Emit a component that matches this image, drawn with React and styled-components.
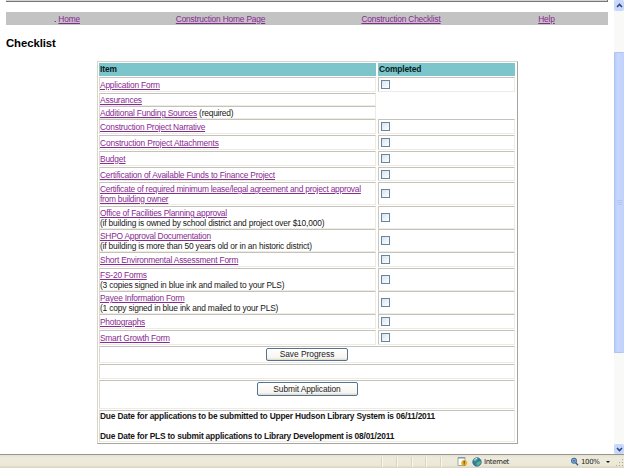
import React from 'react';
import styled, { createGlobalStyle } from 'styled-components';

const Global = createGlobalStyle`
  * { box-sizing: border-box; }
  body { margin: 0; background: #fff; overflow: hidden; }
`;

const Window = styled.div`
  width: 624px;
  height: 468px;
  display: grid;
  grid-template: 454px 14px / 614px 10px;
  background: #fff;
  color: #161616;
  font: 8.4px/10px "Liberation Sans", Arial, sans-serif;
  letter-spacing: -0.19px;
  overflow: hidden;
`;

const Page = styled.main`
  overflow: hidden;
  padding-left: 6px;
`;

const Banner = styled.div`
  width: 602px;
  height: 2px;
  background: #d4d4d4;
  border-bottom: 1px solid #777;
  border-right: 1px solid #777;
`;

const Nav = styled.nav`
  width: 602px;
  height: 13px;
  margin-top: 10px;
  padding-left: 3px;
  background: #c3c3c3;
  display: grid;
  grid-template-columns: 116px 191px 170px 121px;
  text-align: center;
  line-height: 14px;
`;

const Link = styled.a`
  color: #882a92;
  text-decoration: underline;
  text-decoration-thickness: 1px;
  text-underline-offset: 1px;
`;

const Title = styled.h1`
  margin: 11px 0 0;
  height: 14px;
  font-size: 11.3px;
  line-height: 14px;
  letter-spacing: -0.05px;
  color: #000;
`;

const Table = styled.section`
  width: 421px;
  height: 383px;
  margin: 11px 0 0 91px;
  padding: 1px 2px 0 1px;
  border: 1px solid #d9d6c9;
  border-right: 1px solid #a5a59d;
  border-bottom: 1px solid #a5a59d;
`;

const Row = styled.div`
  height: ${(p) => p.$height}px;
  display: grid;
  grid-template-columns: ${(p) => (p.$full ? '416px' : '277px 137px')};
  column-gap: 2px;
  padding-bottom: 1px;
`;

const HeadCell = styled.div`
  background: #7cc5cb;
  color: #071d20;
  font-weight: bold;
  line-height: 13px;
  padding-left: 1px;
  letter-spacing: -0.12px;
`;

const Cell = styled.div`
  border: 1px solid #eeebe4;
  border-top-color: #c4c2ba;
  border-left-color: #dedbd2;
  display: flex;
  flex-direction: column;
  justify-content: center;
  align-items: flex-start;
  white-space: nowrap;
`;

const ItemCell = styled(Cell)`
  padding-top: 1px;
  letter-spacing: ${(p) => p.$spacing || -0.19}px;
`;

const Note = styled.span`
  letter-spacing: -0.17px;
`;

const CheckCell = styled(Cell)`
  padding-left: 2px;
  border-left-color: #c9c6bc;
`;

const Check = styled.input`
  appearance: none;
  width: 9px;
  height: 9px;
  margin: 0;
  border: 1px solid #6685a3;
  background: linear-gradient(135deg, #d9e2ea, #fff);
`;

const ActionCell = styled(Cell)`
  justify-content: flex-start;
  align-items: center;
  padding-top: 1px;
`;

const Button = styled.button`
  width: ${(p) => p.$width}px;
  height: ${(p) => p.$height}px;
  padding: 0;
  border: 1px solid #55738f;
  border-radius: 2px;
  background: linear-gradient(#fff, #f6f5f0 80%, #dcd9ce);
  color: #222;
  font: 8.4px/11px "Liberation Sans", Arial, sans-serif;
  letter-spacing: ${(p) => p.$spacing}px;
`;

const Dates = styled(Cell)`
  justify-content: space-between;
  font-weight: bold;
  letter-spacing: ${-0.19}px;
`;

const Scrollbar = styled.aside`
  display: grid;
  grid-template-rows: 11px 41px 301px 1fr 10px;
  background: #f9f9f7;
`;

const Arrow = styled.div`
  background: #c8d8fc;
  border-radius: 2px;
  display: grid;
  place-items: center;
`;

const Thumb = styled.div`
  grid-row: 3;
  background: linear-gradient(90deg, #b8ccf8, #c7d7ff 30%, #c0d1fc);
  border-radius: 1px;
  border: solid #aec4f3;
  border-width: 1px 0 1px 1px;
  display: grid;
  place-items: center;
`;

const DownArrow = styled(Arrow)`
  grid-row: 5;
`;

const Status = styled.footer`
  grid-column: 1 / 3;
  border-top: 1px solid #969589;
  background: linear-gradient(#e5e2d3, #eeebdc 25%, #ebe8d8 78%, #d8d4c3);
  display: grid;
  grid-template-columns: 381px 15px 15px 14px 15px 17px 15px 11px 87px 10px 25px 1fr;
  align-items: center;
  font: 7px/12px "DejaVu Sans", sans-serif;
  color: #222;
`;

const Divider = styled.div`
  height: 10px;
  border-left: 1px solid #d9d5c5;
  box-shadow: inset 1px 0 #f8f6ed;
`;

const Label = styled.span`
  padding-left: 1px;
  letter-spacing: -0.35px;
  white-space: nowrap;
`;

const items = [
  { label: 'Application Form', height: 16, check: true },
  { label: 'Assurances', height: 13 },
  { label: 'Additional Funding Sources', suffix: ' (required)', height: 13, spacing: -0.21 },
  { label: 'Construction Project Narrative', height: 16, check: true, spacing: -0.22 },
  { label: 'Construction Project Attachments', height: 16, check: true, spacing: -0.16 },
  { label: 'Budget', height: 16, check: true },
  { label: 'Certification of Available Funds to Finance Project', height: 15, check: true },
  { label: 'Certificate of required minimum lease/legal agreement and project approval', second: 'from building owner', height: 24, check: true, spacing: -0.25 },
  { label: 'Office of Facilities Planning approval', note: '(if building is owned by school district and project over $10,000)', height: 23, check: true, spacing: -0.22 },
  { label: 'SHPO Approval Documentation', note: '(if building is more than 50 years old or in an historic district)', height: 23, check: true, spacing: -0.24 },
  { label: 'Short Environmental Assessment Form', height: 16, check: true, spacing: -0.2 },
  { label: 'FS-20 Forms', note: '(3 copies signed in blue ink and mailed to your PLS)', height: 23, check: true },
  { label: 'Payee Information Form', note: '(1 copy signed in blue ink and mailed to your PLS)', height: 23, check: true, spacing: -0.24 },
  { label: 'Photographs', height: 16, check: true, spacing: -0.22 },
  { label: 'Smart Growth Form', height: 16, check: true, spacing: -0.22 },
];

function ChecklistRow({ item }) {
  return (
    <Row $height={item.height}>
      <ItemCell $spacing={item.spacing}>
        <span><Link>{item.label}</Link>{item.suffix}</span>
        {item.second && <Link>{item.second}</Link>}
        {item.note && <Note>{item.note}</Note>}
      </ItemCell>
      {item.check && <CheckCell><Check type="checkbox" aria-label={item.label} /></CheckCell>}
    </Row>
  );
}

export default function App() {
  return (
    <>
      <Global />
      <Window>
        <Page>
          <Banner />
          <Nav>
            <span>. <Link>Home</Link></span>
            <Link>Construction Home Page</Link>
            <Link>Construction Checklist</Link>
            <Link>Help</Link>
          </Nav>
          <Title>Checklist</Title>
          <Table>
            <Row $height={14}><HeadCell>Item</HeadCell><HeadCell>Completed</HeadCell></Row>
            {items.map((item) => <ChecklistRow key={item.label} item={item} />)}
            <Row $full $height={18}><ActionCell><Button $width={82} $height={13} $spacing={-0.02}>Save Progress</Button></ActionCell></Row>
            <Row $full $height={16}><Cell /></Row>
            <Row $full $height={30}><ActionCell><Button $width={101} $height={14} $spacing={-0.09}>Submit Application</Button></ActionCell></Row>
            <Row $full $height={33}><Dates>
              <span>Due Date for applications to be submitted to Upper Hudson Library System is 06/11/2011</span>
              <span>Due Date for PLS to submit applications to Library Development is 08/01/2011</span>
            </Dates></Row>
          </Table>
        </Page>
        <Scrollbar>
          <Arrow><svg width="7" height="5" viewBox="0 0 7 5"><path d="M1 4 3.5 1.5 6 4" fill="none" stroke="#30477c" strokeWidth="1.6" /></svg></Arrow>
          <Thumb><svg width="5" height="5" viewBox="0 0 5 5"><path d="M0 .5h5M0 2.5h5M0 4.5h5" stroke="#a9c0f2" strokeWidth=".7" /></svg></Thumb>
          <DownArrow><svg width="7" height="5" viewBox="0 0 7 5"><path d="M1 1 3.5 3.5 6 1" fill="none" stroke="#30477c" strokeWidth="1.6" /></svg></DownArrow>
        </Scrollbar>
        <Status>
          <span /><Divider /><Divider /><Divider /><Divider /><Divider />
          <svg width="11" height="10" viewBox="0 0 11 10"><path d="M1 .5h7v8H1z" fill="#fff" stroke="#a4a49b" /><path d="M1 1h7" stroke="#6f91b6" /><circle cx="7.2" cy="6" r="3" fill="#e8b531" /><path d="M7.2 3.7v3M7.2 7.6v.9" stroke="#70430b" strokeWidth="1.1" /></svg>
          <svg width="10" height="10" viewBox="0 0 10 10"><circle cx="5" cy="5" r="4.3" fill="#347d9b" stroke="#2c6078" strokeWidth=".6" /><path d="M1.5 3.5 3 1.5 6 1 5 3 3 4.7zM5.5 5l3-1 .4 2L6 9 4 7z" fill="#5ab49b" /><path d="M2.5 2.5 5 1.3" stroke="#d5f2f5" /></svg>
          <Label>Internet</Label>
          <svg width="9" height="9" viewBox="0 0 9 9"><circle cx="4" cy="3.7" r="2.4" fill="#b3d2ee" stroke="#376aa3" strokeWidth="1.1" /><path d="m5.7 5.6 2.3 2.7" stroke="#365b83" strokeWidth="1.4" /><path d="M2.7 3.7h2.6M4 2.4V5" stroke="#244f88" strokeWidth=".8" /></svg>
          <Label>100%</Label>
          <svg width="20" height="12" viewBox="0 0 20 12"><path d="M1 5h4L3 7z" fill="#111" /><path d="M17 3h1v1h-1zM14 6h1v1h-1zM17 6h1v1h-1zM11 9h1v1h-1zM14 9h1v1h-1zM17 9h1v1h-1z" fill="#aaa696" /></svg>
        </Status>
      </Window>
    </>
  );
}
